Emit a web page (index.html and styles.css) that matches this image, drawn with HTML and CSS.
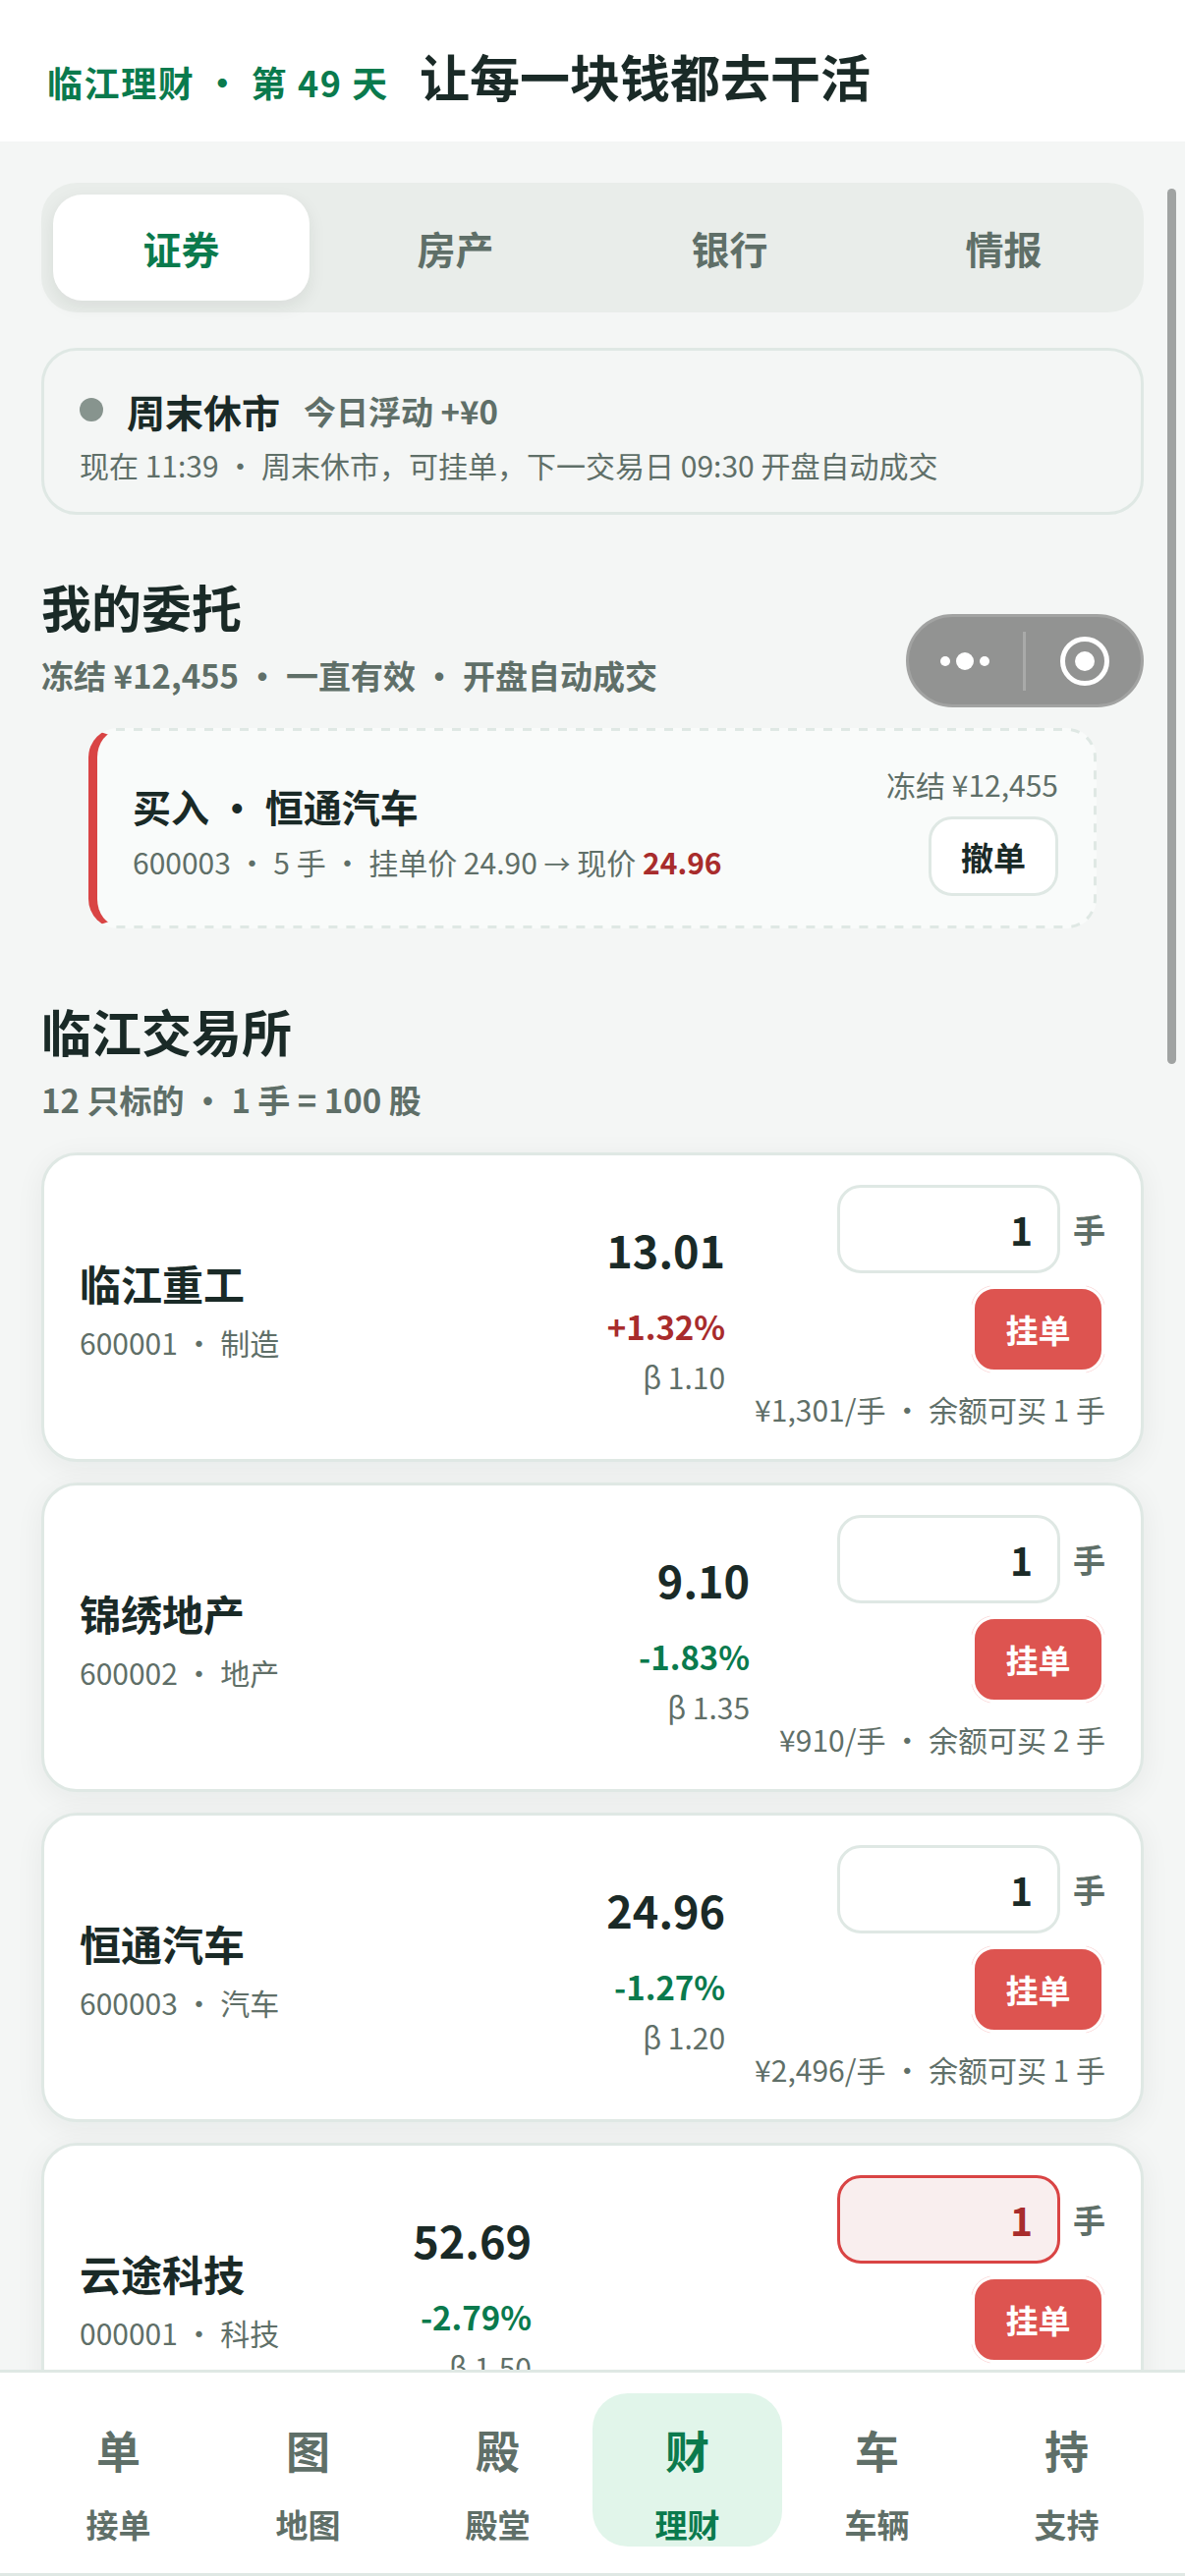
FILE: index.html
```html
<!DOCTYPE html>
<html lang="zh-CN">
<head>
<meta charset="utf-8">
<title>临江理财</title>
<link rel="stylesheet" href="styles.css">
</head>
<body>
<header class="top">
  <span class="top-day">临江理财 · 第 49 天</span>
  <span class="top-title">让每一块钱都去干活</span>
</header>

<main class="main">
  <div class="tabs">
    <div class="tab on">证券</div>
    <div class="tab">房产</div>
    <div class="tab">银行</div>
    <div class="tab">情报</div>
  </div>

  <div class="status">
    <div class="status-head">
      <i class="status-dot"></i>
      <b>周末休市</b>
      <span>今日浮动 +¥0</span>
    </div>
    <div class="status-sub">现在 11:39 · 周末休市，可挂单，下一交易日 09:30 开盘自动成交</div>
  </div>

  <h2 class="sec-title first">我的委托</h2>
  <div class="sec-sub">冻结 ¥12,455 · 一直有效 · 开盘自动成交</div>

  <div class="order">
    <svg class="order-dash" viewBox="0 0 1026 204" fill="none">
      <path d="M28 1.5H996A28.5 28.5 0 0 1 1024.5 30V174A28.5 28.5 0 0 1 996 202.5H28" stroke="#dfe8e4" stroke-width="3" stroke-dasharray="9 9"/>
    </svg>
    <div>
      <div class="order-name">买入 · 恒通汽车</div>
      <div class="order-sub">600003 · 5 手 · 挂单价 24.90 <span class="arrow">→</span> 现价 <b>24.96</b></div>
    </div>
    <div class="order-side">
      <div class="order-frozen">冻结 ¥12,455</div>
      <div class="cancel">撤单</div>
    </div>
  </div>

  <h2 class="sec-title second">临江交易所</h2>
  <div class="sec-sub">12 只标的 · 1 手 = 100 股</div>

  <div class="stock">
    <div class="stock-info">
      <div class="stock-name">临江重工</div>
      <div class="stock-code">600001 · 制造</div>
    </div>
    <div class="stock-price">
      <div class="price">13.01</div>
      <div class="change up">+1.32%</div>
      <div class="beta">β 1.10</div>
    </div>
    <div class="trade">
      <div class="qty-row"><div class="qty">1</div><span>手</span></div>
      <div class="place">挂单</div>
      <div class="hint">¥1,301/手 · 余额可买 1 手</div>
    </div>
  </div>

  <div class="stock">
    <div class="stock-info">
      <div class="stock-name">锦绣地产</div>
      <div class="stock-code">600002 · 地产</div>
    </div>
    <div class="stock-price">
      <div class="price">9.10</div>
      <div class="change down">-1.83%</div>
      <div class="beta">β 1.35</div>
    </div>
    <div class="trade">
      <div class="qty-row"><div class="qty">1</div><span>手</span></div>
      <div class="place">挂单</div>
      <div class="hint">¥910/手 · 余额可买 2 手</div>
    </div>
  </div>

  <div class="stock">
    <div class="stock-info">
      <div class="stock-name">恒通汽车</div>
      <div class="stock-code">600003 · 汽车</div>
    </div>
    <div class="stock-price">
      <div class="price">24.96</div>
      <div class="change down">-1.27%</div>
      <div class="beta">β 1.20</div>
    </div>
    <div class="trade">
      <div class="qty-row"><div class="qty">1</div><span>手</span></div>
      <div class="place">挂单</div>
      <div class="hint">¥2,496/手 · 余额可买 1 手</div>
    </div>
  </div>

  <div class="stock">
    <div class="stock-info">
      <div class="stock-name">云途科技</div>
      <div class="stock-code">000001 · 科技</div>
    </div>
    <div class="stock-price">
      <div class="price">52.69</div>
      <div class="change down">-2.79%</div>
      <div class="beta">β 1.50</div>
    </div>
    <div class="trade wide">
      <div class="qty-row"><div class="qty bad">1</div><span>手</span></div>
      <div class="place">挂单</div>
    </div>
  </div>
</main>

<div class="scrollbar"></div>

<div class="capsule">
  <div class="capsule-dots"><i></i><i class="big"></i><i></i></div>
  <div class="capsule-line"></div>
  <div class="capsule-ring"><i></i></div>
</div>

<nav class="nav">
  <div class="nav-item"><div class="nav-icon">单</div><div class="nav-label">接单</div></div>
  <div class="nav-item"><div class="nav-icon">图</div><div class="nav-label">地图</div></div>
  <div class="nav-item"><div class="nav-icon">殿</div><div class="nav-label">殿堂</div></div>
  <div class="nav-item on"><div class="nav-icon">财</div><div class="nav-label">理财</div></div>
  <div class="nav-item"><div class="nav-icon">车</div><div class="nav-label">车辆</div></div>
  <div class="nav-item"><div class="nav-icon">持</div><div class="nav-label">支持</div></div>
</nav>
</body>
</html>
```

FILE: styles.css
```css
* {
	box-sizing: border-box;
}
html, body {
	margin: 0;
	padding: 0;
}
body {
	position: relative;
	display: flex;
	flex-direction: column;
	width: 1206px;
	height: 2622px;
	overflow: hidden;
	background: #f4f6f5;
	color: #1a2a27;
	font-family: "Noto Sans CJK SC", "Noto Sans", sans-serif;
}

/* header */
.top {
	flex: none;
	display: flex;
	align-items: baseline;
	gap: 31px;
	height: 144px;
	padding: 44px 48px 0;
	background: #fff;
}
.top-day {
	color: #0a7a4d;
	font-size: 36px;
	font-weight: 700;
	letter-spacing: 1.6px;
	line-height: 54px;
}
.top-title {
	font-size: 51px;
	font-weight: 700;
	line-height: 66px;
}

/* scrolling part */
.main {
	flex: 1;
	min-height: 0;
	overflow: hidden;
	padding: 42px 42px 0;
}

.tabs {
	display: flex;
	gap: 18px;
	height: 132px;
	padding: 12px;
	border-radius: 36px;
	background: #e9edea;
}
.tab {
	flex: 1;
	display: flex;
	align-items: center;
	justify-content: center;
	border-radius: 30px;
	color: #5f6f68;
	font-size: 39px;
	font-weight: 700;
}
.tab.on {
	background: #fff;
	color: #0a7a4d;
	box-shadow: 0 6px 18px rgba(20, 40, 30, .08);
}

.status {
	height: 170px;
	margin-top: 36px;
	padding: 31px 36px 0;
	border: 3px solid #dfe8e4;
	border-radius: 36px;
}
.status-head {
	display: flex;
	align-items: center;
	gap: 24px;
	height: 60px;
}
.status-head b {
	font-size: 39px;
	font-weight: 700;
}
.status-head span {
	color: #5f6f68;
	font-size: 33px;
	font-weight: 600;
}
.status-dot {
	width: 24px;
	height: 24px;
	margin-top: -3px;
	border-radius: 50%;
	background: #87948e;
}
.status-sub {
	margin-top: 1px;
	color: #5f6f68;
	font-size: 30px;
	line-height: 48px;
}

.sec-title {
	margin: 0;
	font-size: 51px;
	font-weight: 700;
	line-height: 66px;
}
.sec-title.first {
	margin-top: 60px;
}
.sec-title.second {
	margin-top: 71px;
}
.sec-sub {
	margin-top: 13px;
	color: #5f6f68;
	font-size: 33px;
	font-weight: 600;
	line-height: 48px;
}

.order {
	position: relative;
	display: flex;
	align-items: center;
	justify-content: space-between;
	height: 204px;
	margin: 30px 48px 0;
	padding: 3px 36px 0 36px;
	border: 3px solid transparent;
	border-left: 9px solid #d94444;
	border-radius: 30px;
	background: #f9fbfa;
}
.order-dash {
	position: absolute;
	top: -3px;
	left: -9px;
	width: 1026px;
	height: 204px;
}
.order-name {
	padding-top: 3px;
	font-size: 39px;
	font-weight: 700;
	line-height: 60px;
}
.order-sub {
	margin-top: 3px;
	color: #5f6f68;
	font-size: 30px;
	line-height: 48px;
}
.order-sub .arrow {
	font-size: 27px;
}
.order-sub b {
	color: #a82c2c;
	font-weight: 700;
}
.order-side {
	position: relative;
	display: flex;
	flex-direction: column;
	align-items: flex-end;
	gap: 12px;
}
.order-frozen {
	color: #5f6f68;
	font-size: 30px;
	line-height: 42px;
}
.cancel {
	display: flex;
	align-items: center;
	justify-content: center;
	width: 132px;
	height: 81px;
	border: 3px solid #dfe8e4;
	border-radius: 24px;
	background: #fff;
	font-size: 33px;
	font-weight: 700;
}

.stock {
	display: flex;
	align-items: center;
	height: 315px;
	margin-bottom: 21px;
	padding: 0 36px;
	border: 3px solid #dfe8e4;
	border-radius: 36px;
	background: #fff;
	box-shadow: 0 6px 30px rgba(20, 40, 30, .06);
}
.stock-price + .trade {
	margin-left: 30px;
}
.sec-sub + .stock {
	margin-top: 30px;
}
.stock-info {
	flex: 1;
	padding-top: 5px;
}
.stock-name {
	font-size: 42px;
	font-weight: 700;
	line-height: 60px;
}
.stock-code {
	margin-top: 6px;
	color: #5f6f68;
	font-size: 30px;
	line-height: 48px;
}
.stock-price {
	text-align: right;
}
.price {
	font-size: 45px;
	font-weight: 700;
	line-height: 66px;
}
.change {
	margin-top: 18px;
	font-size: 33px;
	font-weight: 700;
	line-height: 54px;
}
.change.up {
	color: #a82c2c;
}
.change.down {
	color: #0a7a4d;
}
.beta {
	margin-top: 3px;
	color: #5f6f68;
	font-size: 30px;
	line-height: 42px;
}
.trade {
	display: flex;
	flex-direction: column;
	align-items: flex-end;
}
.trade.wide {
	width: 554px;
	min-height: 249px;
}
.qty-row {
	display: flex;
	align-items: center;
	gap: 13px;
	color: #5f6f68;
	font-size: 33px;
	font-weight: 600;
}
.qty {
	width: 227px;
	height: 90px;
	padding-right: 25px;
	border: 3px solid #dfe8e4;
	border-radius: 24px;
	background: #fff;
	color: #1a2a27;
	font-size: 39px;
	font-weight: 700;
	line-height: 84px;
	text-align: right;
}
.qty.bad {
	border-color: #d94444;
	background: #f9eeee;
	color: #a82c2c;
}
.place {
	position: relative;
	display: flex;
	align-items: center;
	justify-content: center;
	width: 137px;
	height: 90px;
	margin-top: 12px;
	border: 4px solid #fff;
	border-radius: 24px;
	background: #dd5450;
	color: #fff;
	font-size: 33px;
	font-weight: 700;
}
/* the faint pink shows only round the corners */
.place::before {
	content: "";
	position: absolute;
	inset: -4px;
	border: 1px solid #fbdcdc;
	border-radius: 24px;
	-webkit-mask:
		linear-gradient(#000 0 0) 0 0 / 20px 20px no-repeat,
		linear-gradient(#000 0 0) 100% 0 / 20px 20px no-repeat,
		linear-gradient(#000 0 0) 0 100% / 20px 20px no-repeat,
		linear-gradient(#000 0 0) 100% 100% / 20px 20px no-repeat;
	mask:
		linear-gradient(#000 0 0) 0 0 / 20px 20px no-repeat,
		linear-gradient(#000 0 0) 100% 0 / 20px 20px no-repeat,
		linear-gradient(#000 0 0) 0 100% / 20px 20px no-repeat,
		linear-gradient(#000 0 0) 100% 100% / 20px 20px no-repeat;
}
.hint {
	margin-top: 15px;
	color: #5f6f68;
	font-size: 30px;
	line-height: 42px;
	white-space: nowrap;
}

/* things over the page */
.scrollbar {
	position: absolute;
	top: 192px;
	left: 1188px;
	width: 9px;
	height: 891px;
	border-radius: 5px;
	background: #a0a3a2;
}
.capsule {
	position: absolute;
	top: 625px;
	left: 922px;
	display: flex;
	align-items: center;
	width: 242px;
	height: 95px;
	border: 3px solid #a2a3a2;
	border-radius: 48px;
	background: #929392;
}
.capsule-dots {
	display: flex;
	align-items: center;
	justify-content: center;
	gap: 6px;
	width: 113px;
}
.capsule-dots i {
	width: 10px;
	height: 10px;
	border-radius: 50%;
	background: #fff;
}
.capsule-dots i.big {
	width: 18px;
	height: 18px;
}
.capsule-line {
	width: 3px;
	height: 60px;
	margin-left: 3px;
	background: #a9aaa9;
}
.capsule-ring {
	display: flex;
	align-items: center;
	justify-content: center;
	width: 50px;
	height: 50px;
	margin-left: 35px;
	border: 5px solid #fff;
	border-radius: 50%;
}
.capsule-ring i {
	width: 20px;
	height: 20px;
	border-radius: 50%;
	background: #fff;
}

/* bottom nav */
.nav {
	flex: none;
	position: relative;
	display: flex;
	height: 210px;
	padding: 21px 24px 27px;
	border-top: 3px solid #dfe8e4;
	border-bottom: 3px solid #dfe8e4;
	background: #fff;
}
.nav-item {
	flex: 1;
	display: flex;
	flex-direction: column;
	align-items: center;
	padding-top: 28px;
	border-radius: 36px;
	color: #5f6f68;
}
.nav-item.on {
	background: #e1f5ea;
	color: #0a7a4d;
}
.nav-icon {
	font-size: 45px;
	font-weight: 700;
	line-height: 60px;
}
.nav-label {
	margin-top: 24px;
	font-size: 33px;
	font-weight: 600;
	line-height: 42px;
}
```
